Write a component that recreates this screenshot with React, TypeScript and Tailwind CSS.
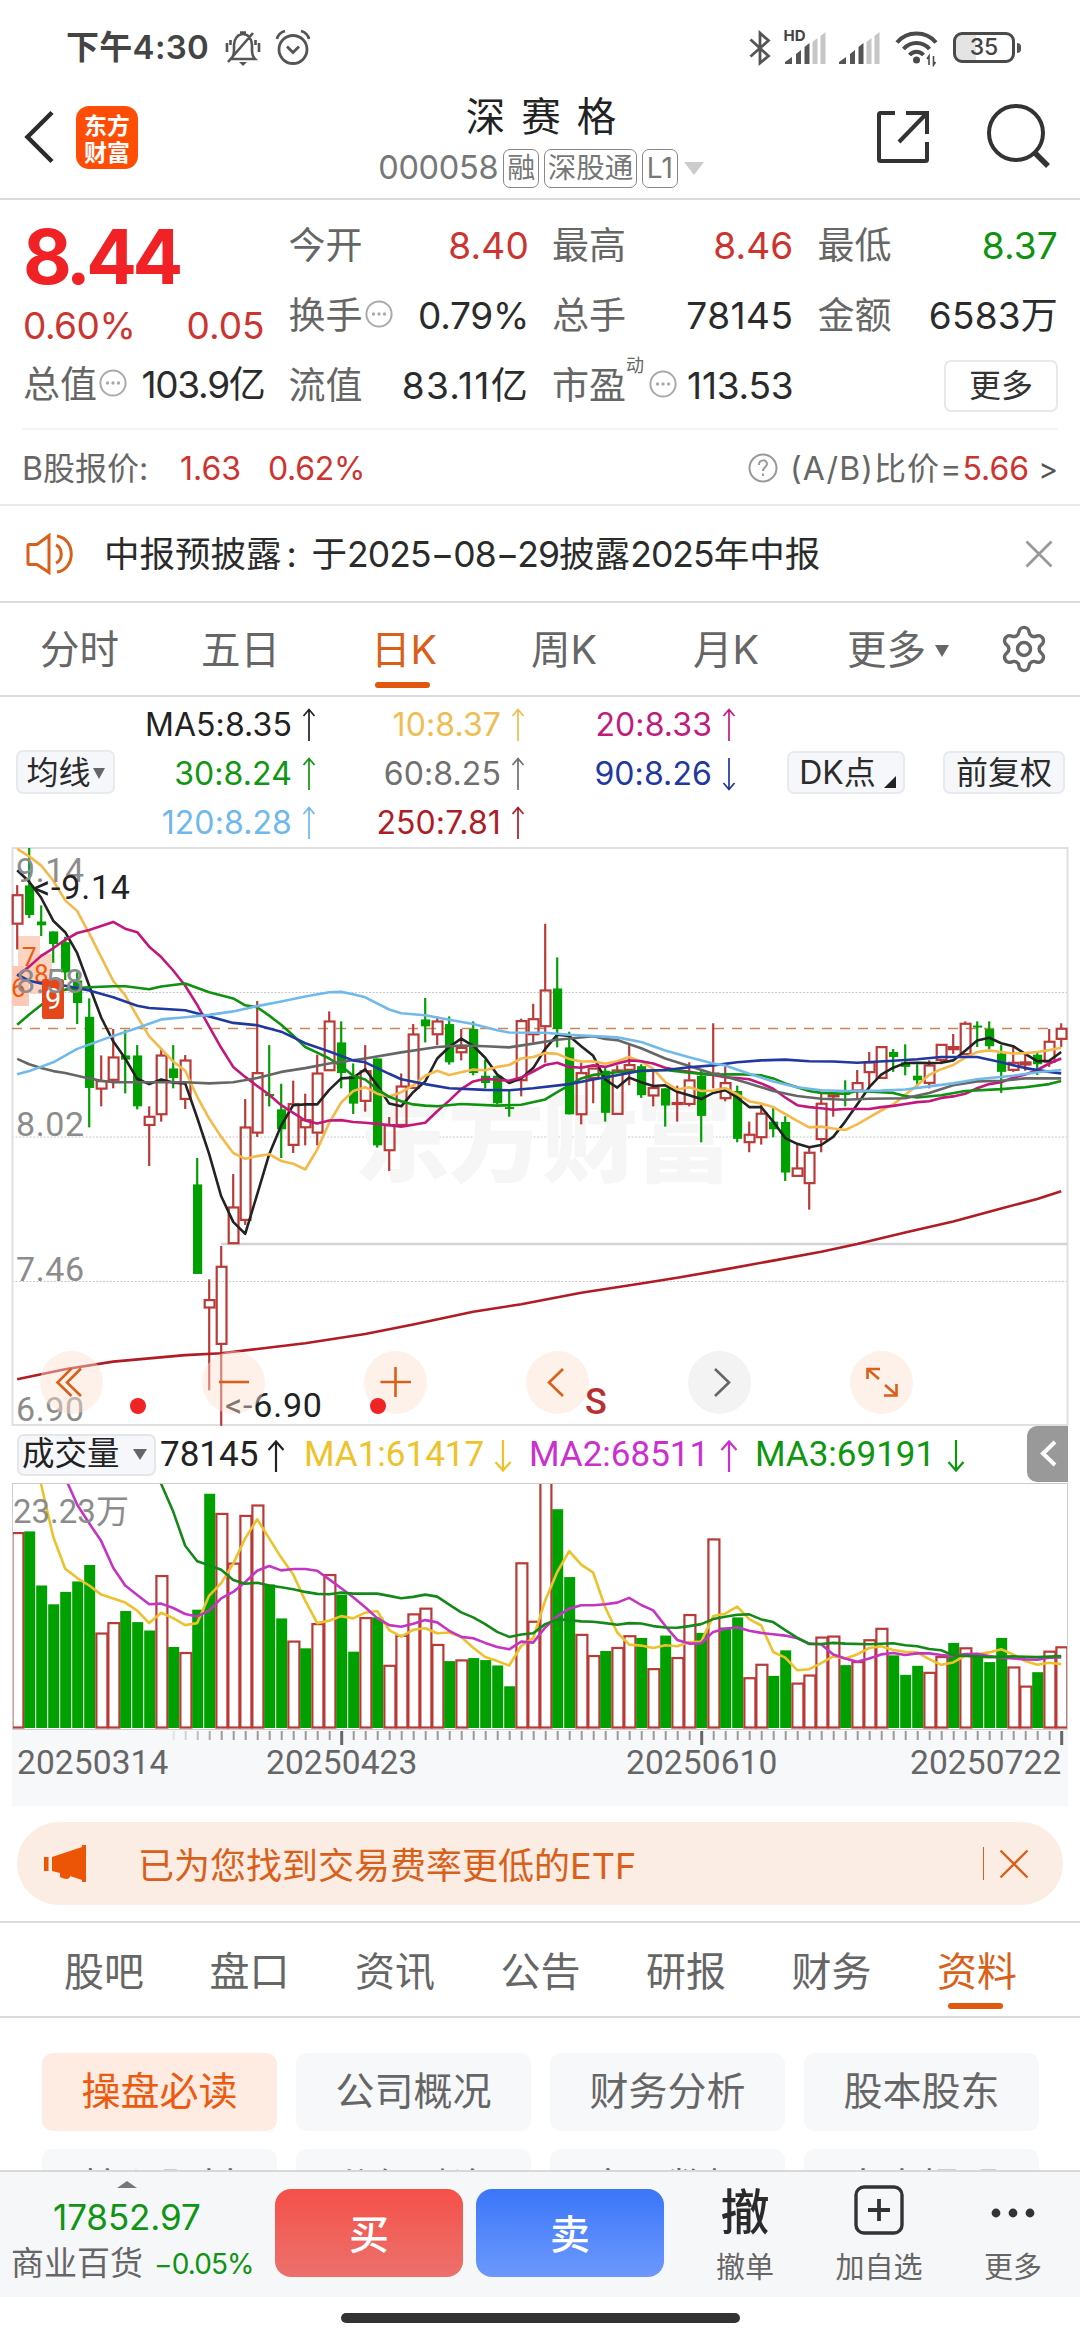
import type { ReactNode } from 'react'
import { Settings } from 'lucide-react'

const CJK = "font-['Inter','Noto_Sans_CJK_SC',sans-serif]"
const ROBOTO = "font-['Roboto','Noto_Sans_CJK_SC',sans-serif]"

// ── Price candles: [up, bodyTop, bodyBottom, high, low] on the price grid (20 = 9.14, 1528 = 6.90) ──
const CANDLES: number[][] = [
  [1, 142, 219, 117, 285], [0, 118, 195, 20, 203], [0, 212, 222, 170, 250], [0, 238, 271, 238, 320],
  [0, 266, 345, 252, 365], [0, 366, 425, 345, 480], [0, 461, 647, 413, 750], [1, 628, 650, 562, 695],
  [1, 566, 627, 493, 648], [0, 562, 573, 495, 661], [0, 562, 695, 535, 703], [1, 721, 745, 695, 851],
  [1, 561, 717, 543, 735], [0, 596, 621, 535, 648], [1, 574, 677, 561, 702], [0, 899, 1133, 830, 1133],
  [1, 1200, 1222, 1147, 1437], [1, 1113, 1317, 1060, 1530], [1, 958, 1054, 872, 1054], [1, 749, 993, 676, 1005],
  [1, 607, 765, 420, 775], [0, 663, 668, 535, 695], [0, 703, 755, 636, 830], [1, 688, 797, 628, 817],
  [1, 730, 751, 662, 797], [1, 608, 765, 560, 797], [1, 472, 602, 447, 602], [0, 528, 608, 473, 648],
  [0, 615, 688, 583, 715], [1, 602, 682, 535, 709], [0, 570, 797, 570, 803], [1, 743, 811, 723, 864],
  [1, 642, 745, 609, 745], [1, 506, 648, 480, 648], [0, 468, 486, 412, 528], [1, 472, 508, 460, 535],
  [0, 480, 580, 460, 586], [1, 541, 555, 493, 575], [0, 493, 608, 473, 614], [0, 615, 634, 573, 648],
  [0, 615, 687, 615, 690], [0, 697, 702, 650, 722], [1, 471, 628, 466, 669], [1, 466, 508, 427, 528],
  [1, 391, 487, 218, 581], [0, 387, 493, 306, 541], [0, 541, 716, 500, 716], [1, 607, 717, 581, 742],
  [1, 595, 622, 595, 687], [0, 602, 712, 590, 735], [1, 600, 716, 588, 716], [1, 586, 601, 535, 640],
  [0, 590, 666, 585, 673], [1, 646, 668, 602, 695], [0, 648, 693, 648, 748], [1, 685, 690, 641, 735],
  [1, 626, 690, 580, 695], [0, 615, 720, 600, 789], [1, 608, 613, 478, 648], [1, 633, 675, 590, 682],
  [0, 655, 780, 641, 789], [1, 768, 790, 735, 815], [1, 713, 777, 690, 795], [0, 735, 755, 697, 776],
  [0, 736, 868, 721, 890], [1, 856, 878, 795, 878], [1, 815, 897, 803, 965], [1, 687, 782, 660, 815],
  [1, 665, 670, 665, 722], [0, 660, 665, 627, 695], [1, 633, 655, 600, 675], [1, 579, 607, 553, 650],
  [1, 539, 622, 539, 622], [0, 553, 566, 545, 605], [0, 580, 592, 533, 614], [0, 615, 627, 585, 643],
  [1, 587, 635, 575, 648], [1, 533, 575, 533, 585], [1, 539, 547, 506, 558], [1, 478, 560, 473, 560],
  [0, 484, 489, 473, 540], [0, 493, 538, 473, 545], [0, 557, 605, 535, 660], [1, 580, 601, 535, 605],
  [1, 579, 587, 553, 602], [0, 560, 585, 555, 613], [1, 525, 580, 493, 592], [1, 491, 520, 478, 540],
]

// Moving averages as "candleIndex:level" pairs
const PRICE_LINES = [
  { color: '#b01c24', pts: '0:1408 4:1382 8:1362 14:1345 17:1340 20:1329 24:1314 29:1290 33:1265 38:1232 42:1212 47:1182 52:1158 55:1143 59:1121 63:1098 67:1075 70:1055 74:1025 78:996 82:962 85:937 87:917' },
  { color: '#232323', pts: '0:78 1:108 2:150 3:210 4:240 5:295 6:380 7:463 8:525 9:570 10:623 11:637 12:625 13:633 14:635 15:725 16:820 17:930 18:997 19:1028 20:925 21:820 22:745 23:692 24:690 25:690 26:652 27:622 28:620 29:598 30:640 31:688 32:695 33:658 34:630 35:570 36:540 37:518 38:537 39:568 40:612 41:634 42:622 43:595 44:545 45:508 46:511 47:538 48:563 49:625 50:646 51:620 52:632 53:642 54:640 55:657 56:666 57:676 58:660 59:653 60:672 61:697 62:697 63:735 64:778 65:793 66:802 67:796 68:775 69:735 70:690 71:645 72:612 73:594 74:582 75:581 76:582 77:581 78:575 79:550 80:523 81:516 82:530 83:538 84:558 85:577 86:576 87:553' },
  { color: '#f5b94a', pts: '0:22 1:42 2:66 3:105 4:157 5:185 6:243 7:305 8:367 9:405 10:460 11:512 12:545 13:578 14:602 15:670 16:727 17:775 18:817 19:832 20:825 21:820 22:838 23:845 24:860 25:808 26:738 27:685 28:655 29:645 30:662 31:670 32:658 33:640 34:615 35:602 36:613 37:606 38:599 39:601 40:592 41:587 42:570 43:566 44:556 45:558 46:571 47:578 48:577 49:584 50:577 51:566 52:578 53:597 54:632 55:651 56:645 57:655 58:654 59:647 60:663 61:682 62:688 63:697 64:715 65:733 66:750 67:748 68:753 69:757 70:742 71:724 72:706 73:690 74:665 75:640 76:613 77:598 78:587 79:568 80:553 81:549 82:553 83:557 84:556 85:553 86:548 87:542' },
  { color: '#c2187c', pts: '0:355 1:330 2:302 3:282 4:260 5:242 6:234 7:224 8:213 9:231 10:240 11:278 12:305 13:340 14:380 15:430 16:487 17:542 18:592 19:618 20:642 21:665 22:692 23:712 24:732 25:740 26:732 27:731 28:736 29:738 30:741 31:744 32:748 33:743 34:738 35:708 36:680 37:650 38:630 39:623 40:626 41:628 42:620 43:604 44:587 45:581 46:592 47:594 48:588 49:592 50:583 51:575 52:577 53:583 54:594 55:600 56:605 57:610 58:613 59:619 60:621 61:624 62:635 63:649 64:672 65:692 66:697 67:700 68:704 69:702 70:702 71:702 72:697 73:694 74:689 75:684 76:682 77:673 78:669 79:662 80:648 81:637 82:632 83:620 84:612 85:600 86:583 87:570' },
  { color: '#0e9210', pts: '0:482 1:455 2:430 3:405 4:390 5:386 6:384 8:381 9:381 11:389 12:382 14:374 16:397 18:413 19:431 20:436 21:458 22:482 23:510 24:540 25:555 26:570 27:590 28:615 29:625 30:650 31:670 32:682 33:690 34:693 35:695 37:689 40:693 42:691 44:677 45:658 46:640 47:622 48:613 50:606 52:603 54:600 56:607 58:612 60:611 62:614 63:622 64:635 65:645 66:655 67:660 69:662 70:655 72:658 73:660 74:668 75:672 77:666 79:655 82:650 84:645 86:637 87:629' },
  { color: '#666666', pts: '0:571 1:585 2:595 3:603 4:608 6:622 7:628 8:632 11:632 14:632 16:635 18:632 20:621 22:605 24:595 26:583 29:570 32:554 35:540 37:536 39:538 41:541 43:531 45:521 48:512 49:519 50:522 52:543 54:570 56:590 58:610 59:617 61:635 63:655 65:668 67:675 69:678 71:675 74:674 76:660 78:640 80:630 82:628 84:622 87:622' },
  { color: '#21389f', pts: '0:350 1:367 2:374 4:380 6:392 8:410 10:432 11:438 14:444 16:460 18:477 20:483 22:500 24:530 26:552 28:575 29:580 31:610 32:624 34:637 36:648 39:652 41:653 43:648 46:637 48:625 50:614 52:602 54:600 56:593 58:588 60:580 62:575 64:573 66:577 68:578 70:581 73:576 75:572 77:566 79:566 80:566 82:580 84:595 86:605 87:609' },
  { color: '#72b9ea', pts: '0:611 1:603 3:580 5:545 8:511 10:490 12:468 14:462 16:456 18:447 20:433 22:421 24:408 26:397 27:396 28:402 29:410 31:442 32:452 34:457 36:469 38:480 40:496 41:502 44:503 46:508 50:515 52:527 54:549 56:567 58:583 59:588 61:610 63:630 65:645 67:653 69:655 72:654 74:651 76:643 78:635 80:624 83:615 85:606 87:600' },
]

// Volume bars: positive = rising day, negative = falling day; number is the bar's top level
const VOLUMES = [
  306, -304, -465, -521, -484, -453, -404, 605, 574, -541, -574, -599, 434, -648, 663, -537, -192, 249, 397, 255, 224,
  -462, -563, 629, -652, 577, 431, -492, -662, 559, -560, 701, 612, 548, 531, 639, -690, 685, -681, -687, -703, -765,
  396, 570, 150, -238, -440, 609, 672, -660, 648, 613, -621, 711, -614, 678, 550, -606, 325, -590, -560, 738, 698,
  -734, -658, 754, 730, 617, 614, -702, 690, 625, 591, -673, -731, -704, 722, 675, -636, 649, -673, -693, -621, 706,
  763, -723, 659, 646,
]

const VOLUME_LINES = [
  { color: '#ecc22c', pts: '1.7:120 2:165 3:320 4:415 5:443 6:465 7:492 8:504 9:516 10:540 11:577 12:546 13:562 14:583 15:577 16:495 17:458 18:400 19:325 20:268 21:325 22:382 23:432 24:510 25:577 26:570 27:556 28:563 29:546 30:541 31:598 32:617 33:597 34:592 35:607 36:605 37:618 38:650 39:678 40:690 41:703 42:645 43:622 44:510 45:425 46:363 47:403 48:427 49:530 50:605 51:641 52:644 53:651 54:643 55:646 56:634 57:632 58:556 59:549 60:528 61:565 62:584 63:663 64:680 65:717 66:714 67:696 68:676 69:682 70:670 71:651 72:646 73:657 74:662 75:664 76:684 77:701 78:694 79:674 80:670 81:664 82:655 83:670 84:690 85:701 86:695 87:699' },
  { color: '#c435c4', pts: '3.5:105 4.2:160 5:225 6:280 7:333 8:412 9:465 10:493 11:521 12:519 13:532 14:550 15:557 16:540 17:503 18:484 19:455 20:421 21:407 22:420 23:416 24:416 25:421 26:447 27:473 28:500 29:530 30:562 31:583 32:588 33:579 34:568 35:575 36:600 37:618 38:622 39:636 40:648 41:655 42:632 43:635 44:590 45:557 46:534 47:524 48:524 49:521 50:516 51:502 52:523 53:539 54:585 55:627 56:638 57:637 58:603 59:594 60:589 61:600 62:606 63:610 64:614 65:622 66:638 67:640 68:670 69:682 70:692 71:682 72:670 73:666 74:672 75:667 76:667 77:672 78:675 79:669 80:668 81:675 82:680 83:682 84:685 85:686 86:680 87:679' },
  { color: '#15881a', pts: '11.4:115 12:163 13:245 14:347 15:393 16:405 17:418 18:449 19:460 20:457 21:465 22:470 23:476 24:484 25:490 26:491 27:486 28:489 30:489 31:496 32:503 33:499 34:492 35:498 36:522 37:545 38:560 39:580 40:603 41:618 42:611 43:607 44:580 45:566 46:568 47:572 48:573 49:577 50:582 51:577 52:578 53:586 54:590 55:591 56:586 57:580 58:565 59:558 60:552 61:551 62:566 63:574 64:598 65:620 66:639 67:639 68:636 69:638 71:640 73:637 74:643 75:646 76:654 77:658 78:673 80:676 81:678 83:676 85:678 87:675' },
]

const RED = '#b93a36'
const GREEN = '#00a000'

const cx = (i: number) => 17.2 + i * 12
const py = (v: number) => (v - 20) * 0.3827 + 1
const vy = (v: number) => (v - 160) / 2.976

function toPoints(pts: string, y: (v: number) => number) {
  return pts.split(' ').map(p => {
    const [i, v] = p.split(':').map(Number)
    return `${cx(i).toFixed(1)},${y(v).toFixed(1)}`
  }).join(' ')
}

// ── Small pieces ──────────────────────────────────────────────────────
function Dots() {
  return (
    <svg width="28" height="28" viewBox="0 0 28 28" fill="none" className="mb-[4px] ml-[2px] shrink-0">
      <circle cx="14" cy="14" r="12.6" stroke="#aaa" strokeWidth="2" />
      <g fill="#aaa"><circle cx="8.5" cy="14" r="1.7" /><circle cx="14" cy="14" r="1.7" /><circle cx="19.5" cy="14" r="1.7" /></g>
    </svg>
  )
}

function Arrow({ down = false }: { down?: boolean }) {
  return (
    <svg width="14" height="34" viewBox="0 0 14 34" fill="none" stroke="currentColor" strokeWidth="1.7" className={down ? 'rotate-180' : ''}>
      <path d="M7 33V2M1.5 8 7 1.5 12.5 8" />
    </svg>
  )
}

function VolArrow({ down = false }: { down?: boolean }) {
  return (
    <svg width="18" height="34" viewBox="0 0 18 34" fill="none" stroke="currentColor" strokeWidth="2.2" className={down ? 'rotate-180' : ''}>
      <path d="M9 33V2M1.5 11 9 2.5 16.5 11" />
    </svg>
  )
}

function Signal() {
  return (
    <>
      <g fill="#555"><path d="M0 35v-2l7-5v7zM11 25l5-4v14h-5zM19.5 18l5-4v21h-5z" /></g>
      <g fill="#c6c6c6"><path d="M27.500 13l5-4v26h-5zM35.500 7l5-4v32h-5z" /></g>
    </>
  )
}

interface StatProps {
  label: ReactNode
  value: string
  color?: string
  icon?: boolean
  tracking?: string
}

function Stat({ label, value, color = 'text-[#2b2b2b]', icon, tracking = 'tracking-[0.2px]' }: StatProps) {
  return (
    <div className="flex h-[70px] items-center justify-between whitespace-nowrap">
      <span className="flex items-center text-[#666]">{label}{icon && <Dots />}</span>
      <span className={`${color} ${tracking}`}>{value}</span>
    </div>
  )
}

function StatusBar() {
  return (
    <div className="flex h-[92px] items-center pt-[3px] pl-[66px] text-[#444]">
      <span className="w-[159px] text-[33px] font-semibold tracking-[0.3px] whitespace-nowrap">下午4:30</span>
      <svg width="36" height="36" viewBox="0 0 36 36" fill="none" stroke="#555" strokeWidth="2.6">
        <path d="M6 29h24c-2-2-3-5-3-9v-5c0-6-4-11-9-11s-9 5-9 11v5c0 4-1 7-3 9zM15 2.500h6M3 32 28 3M2 13v9M34 13v9M5.500 10v5M30.500 10v5" />
        <path d="M14 32h8l-4 4z" fill="#555" stroke="none" />
      </svg>
      <svg width="36" height="38" viewBox="0 0 36 38" fill="none" stroke="#555" strokeWidth="2.800" className="ml-[14px]">
        <circle cx="18" cy="20.500" r="14" />
        <path d="M12 17.500l6 6 6-6M2 10c1-4 4-7 8-8M34 10c-1-4-4-7-8-8" />
      </svg>
      <svg width="22" height="36" viewBox="0 0 22 36" fill="none" stroke="#555" strokeWidth="2.800" className="ml-[438px]">
        <path d="M1.500 9.500 19.500 26 11 33V3L19.500 10.500 1.500 26.500" />
      </svg>
      <svg width="45" height="38" viewBox="-3 0 45 38" className="ml-[11px] overflow-visible">
        <text x="-1.500" y="12" fontSize="15" fontWeight="700" fill="#444" fontFamily="Inter">HD</text>
        <Signal />
      </svg>
      <svg width="42" height="38" viewBox="0 0 42 38" className="ml-[12px]"><Signal /></svg>
      <svg width="44" height="38" viewBox="0 0 44 38" fill="none" stroke="#4a4a4a" strokeWidth="4" className="ml-[14px]">
        <path d="M2 13.500c10-12 29-12 39 0M8.500 20c7-8 19-8 26 0M14.500 26c4-4.500 10-4.500 14 0" />
        <circle cx="21.500" cy="31" r="3.500" fill="#4a4a4a" stroke="none" />
        <path d="M34 36v-9l-2 3M38.500 27v9l2-3" strokeWidth="1.600" />
      </svg>
      <div className="ml-[14px] flex h-[31px] w-[62px] items-center justify-center rounded-[9px] border-[3.5px] border-[#4a4a4a] bg-linear-to-r from-[#e4e4e4] from-35% to-white to-35% text-[23px] font-medium">35</div>
      <div className="ml-[2px] h-[10px] w-[4px] rounded-r bg-[#555]" />
    </div>
  )
}

function Header() {
  return (
    <div className="flex h-[108px] border-b-2 border-[#dcdcdc] pl-[24px]">
      <svg width="32" height="54" viewBox="0 0 32 54" fill="none" stroke="#2b2b2b" strokeWidth="4.500" className="mt-[18px]">
        <path d="M28 2.500 3.500 27 28 51.500" />
      </svg>
      <div className="mt-[14px] ml-[20px] flex h-[63px] w-[62px] flex-col items-center justify-center rounded-[13px] bg-[#ff4d05] font-['Noto_Sans_CJK_SC',sans-serif] text-[23px] leading-[27px] font-bold text-white">
        <span>东方</span>
        <span>财富</span>
      </div>
      <div className="ml-[233px] flex w-[340px] flex-col items-center">
        <div className="h-[56px] text-[39.5px] leading-[51px] text-[#222] [word-spacing:5px]">深 赛 格</div>
        <div className="flex h-[40px] items-center gap-[5px] text-[32.5px] leading-[38px] whitespace-nowrap text-[#777]">
          <span className="tracking-[-0.3px]">000058</span>
          <span className="flex h-[39px] items-center rounded-[7px] border border-[#888] px-[3px] text-[28px]">融</span>
          <span className="flex h-[39px] items-center rounded-[7px] border border-[#888] px-[2.500px] text-[28.5px]">深股通</span>
          <span className="flex h-[39px] items-center rounded-[7px] border border-[#888] px-[4px] text-[28px]">L1</span>
          <span className="ml-[1px] border-x-[10px] border-t-[13px] border-x-transparent border-t-[#ccc]" />
        </div>
      </div>
      <svg width="56" height="56" viewBox="0 0 56 56" fill="none" stroke="#333" strokeWidth="4" className="mt-[17px] ml-[164px]">
        <path d="M20 4H5.500Q4 4 4 5.500V50.500Q4 52 5.500 52H50.500Q52 52 52 50.500V33M31 4H52V25M52 4 24 33" />
      </svg>
      <svg width="66" height="68" viewBox="0 0 66 68" fill="none" stroke="#333" strokeWidth="4" className="mt-[11px] ml-[55px]">
        <circle cx="30" cy="30" r="27" />
        <path d="M49 50 62 63" strokeWidth="5.500" />
      </svg>
    </div>
  )
}

function Quote() {
  return (
    <>
      <div className="mx-[22px] flex h-[230px] border-b-[2px] border-[#f4f4f6] pt-[11px] text-[37px]">
        <div className="w-[243px] pl-[1px]">
          <div className="h-[91px] text-[75px] leading-[91px] font-bold tracking-[-4.5px] text-[#f02226]">8.44</div>
          <div className="flex h-[48px] items-center justify-between text-[#cc3430]"><span className="tracking-[-0.5px]">0.60%</span><span>0.05</span></div>
          <Stat label="总值" value="103.9亿" icon tracking="tracking-[-1.3px]" />
        </div>
        <div className="ml-[24px] w-[241px]">
          <Stat label="今开" value="8.40" color="text-[#cc3430]" />
          <Stat label="换手" value="0.79%" icon tracking="tracking-[-0.3px]" />
          <Stat label="流值" value="83.11亿" tracking="tracking-[1.3px]" />
        </div>
        <div className="ml-[23px] w-[242px]">
          <Stat label="最高" value="8.46" color="text-[#cc3430]" />
          <Stat label="总手" value="78145" tracking="tracking-[0.5px]" />
          <Stat label={<>市盈<sup className="-top-[20px] w-[21px] text-[18px] leading-none">动</sup></>} value="113.53" icon tracking="tracking-[-0.2px]" />
        </div>
        <div className="ml-[24px] w-[241px]">
          <Stat label="最低" value="8.37" color="text-[#0e9210]" />
          <Stat label="金额" value="6583万" />
          <div className="flex h-[70px] items-center justify-end">
            <span className="flex h-[52px] w-[114px] items-center justify-center rounded-[7px] border-2 border-[#e8e8ea] text-[32px] text-[#333]">更多</span>
          </div>
        </div>
      </div>
      <div className="flex h-[76px] items-center border-b-2 border-[#ebebeb] px-[22px] pt-[4px] text-[32px] text-[#666]">
        <span className="w-[158px]">B股报价:</span>
        <span className="w-[88px] text-[#cc3430]">1.63</span>
        <span className="tracking-[-0.3px] text-[#cc3430]">0.62%</span>
        <svg width="30" height="30" viewBox="0 0 30 30" fill="none" stroke="#999" strokeWidth="2" className="mb-[2px] ml-auto">
          <circle cx="15" cy="15" r="13.500" />
          <path d="M11 12c0-6 8-6 8-1 0 3-4 3-4 7M15 20.500v2.500" />
        </svg>
        <span className="ml-[12px] tracking-[1.1px]">(A/B)比价=</span>
        <span className="text-[#cc3430]">5.66</span>
        <span className="ml-[9px] text-[30px] text-[#555]">&gt;</span>
      </div>
    </>
  )
}

function Notice() {
  return (
    <div className="flex h-[97px] items-center border-b-2 border-[#dcdcdc] pl-[26px] text-[35.5px] text-[#2b2b2b]">
      <svg width="50" height="42" viewBox="0 0 50 42" fill="none" stroke="#d9601a" strokeWidth="3">
        <path d="M3 11.500H11L23 2.500V39.500L11 31.500H3Q2 31.500 2 30V13Q2 11.500 3 11.500zM30 12c7 3 7 15 0 18M31 3c19 3 19 33 0 36" />
      </svg>
      <span className="ml-[28px] pt-[3px] whitespace-nowrap">
        中报预披露<span className="inline-block w-[30px] pl-[5px]">:</span>于<span className="tracking-[-0.9px]">2025−08−29</span>披露<span className="tracking-[-0.9px]">2025</span>年中报
      </span>
      <svg width="28" height="28" viewBox="0 0 28 28" stroke="#999" strokeWidth="2.800" className="mr-[27px] ml-auto">
        <path d="M1.500 1.500 26.500 26.500M26.500 1.500 1.500 26.500" />
      </svg>
    </div>
  )
}

function PeriodTabs() {
  return (
    <div className="flex h-[94px] items-center border-b-2 border-[#dcdcdc] pt-[4px] text-[39.5px] text-[#666]">
      <span className="ml-[40px] w-[161px]">分时</span>
      <span className="w-[170px]">五日</span>
      <span className="relative w-[160px] text-[#d9601a]">
        日K
        <span className="absolute -bottom-[7px] left-[4px] h-[6px] w-[55px] rounded bg-[#e0590f]" />
      </span>
      <span className="w-[162px]">周K</span>
      <span className="w-[154px]">月K</span>
      <span className="w-[88px]">更多</span>
      <span className="border-x-[7px] border-t-[12px] border-x-transparent border-t-[#666]" />
      <Settings className="mb-[4px] ml-[49px] h-[52px] w-[52px] text-[#666]" strokeWidth={1.6} />
    </div>
  )
}

const MA_CELLS = [
  ['MA5:8.35', 'text-[#222]', 'up'], ['10:8.37', 'text-[#f0bd50]', 'up'], ['20:8.33', 'text-[#c01c80]', 'up'],
  ['30:8.24', 'text-[#109612]', 'up'], ['60:8.25', 'text-[#707070]', 'up'], ['90:8.26', 'text-[#2138a0]', 'down'],
  ['120:8.28', 'text-[#6fb8ea]', 'up'], ['250:7.81', 'text-[#ae1c26]', 'up'],
]

function MaLegend() {
  return (
    <div className="flex h-[150px] items-center pl-[16px] text-[32px] text-[#2b2b2b]">
      <div className="flex h-[44px] w-[99px] items-center justify-center rounded-[7px] border-2 border-[#e8eaee] bg-[#f6f7fa] pt-[2px] whitespace-nowrap">
        均线<span className="ml-[2px] border-x-[6.500px] border-t-[11px] border-x-transparent border-t-[#666]" />
      </div>
      <div className="grid w-[621px] grid-cols-[201px_209px_211px] pt-[3px]">
        {MA_CELLS.map(([text, color, dir]) => (
          <div key={text} className={`flex h-[49px] items-center justify-end gap-[10px] tracking-[0.1px] whitespace-nowrap ${color}`}>
            {text}<Arrow down={dir === 'down'} />
          </div>
        ))}
      </div>
      <div className="ml-[51px] flex h-[43px] w-[118px] items-center justify-center rounded-[7px] border-2 border-[#e8eaee] bg-[#f6f7fa] pt-[2px] pl-[3px]">
        DK点
        <svg width="12" height="12" viewBox="0 0 12 12" fill="#222" className="mt-[18px] ml-[8px]"><path d="M12 0V12H0z" /></svg>
      </div>
      <div className="ml-[38px] flex h-[43px] w-[122px] items-center justify-center rounded-[7px] border-2 border-[#e8eaee] bg-[#f6f7fa] pt-[2px]">前复权</div>
    </div>
  )
}

const CHART_BUTTONS = [
  'M31.500 17.500 17.500 31.500 31.500 45M41 17.500 27 31.500 41 45',
  'M17 31H47',
  'M16.500 31H47M31.500 16V46',
  'M37 18 23 31.500 37 45',
  'M27 18 41 31.500 27 45',
  'M17.500 28V18H30M17.500 18 29 28M35 34 46.500 44M34 44.500H46.500V33',
]

function PriceChart() {
  return (
    <div className="relative h-[579px]">
      <svg width="1080" height="579" viewBox="0 0 1080 579" className="block">
        <g stroke="#c9c9c9" strokeWidth="1.200" strokeDasharray="2 1.500">
          <line x1="12" x2="1067" y1="145.500" y2="145.500" />
          <line x1="12" x2="1067" y1="290" y2="290" />
          <line x1="12" x2="1067" y1="434.500" y2="434.500" />
        </g>
        <text x="354" y="327" fontSize="96" fontWeight="900" fill="#f6f6f6" fontFamily="Noto Sans CJK SC" textLength="378">东方财富</text>
        <rect x="12.500" y="1" width="1055" height="577" fill="none" stroke="#e0e0e0" strokeWidth="2" />
        <line x1="12" x2="1050" y1="181.500" y2="181.500" stroke="#cf8455" strokeWidth="1.400" strokeDasharray="10 8" />
        <line x1="221" x2="1067" y1="397" y2="397" stroke="#d4d4d8" strokeWidth="2.500" />
        <g fill="#fbc9b5">
          <rect x="12" y="119" width="17" height="40" /><rect x="18" y="89" width="22" height="42" opacity=".8" /><rect x="30" y="107" width="22" height="40" opacity=".8" />
        </g>
        <g fontFamily="Roboto" fontSize="26" fill="#f0590c"><text x="11" y="150">6</text><text x="22" y="119">7</text><text x="34" y="136">8</text></g>
        {CANDLES.map(([up, top, bottom, high, low], i) => {
          const color = up ? RED : GREEN
          const h = Math.max(2, py(bottom) - py(top))
          return (
            <g key={i}>
              <line x1={cx(i)} x2={cx(i)} y1={py(high)} y2={py(up ? top : low)} stroke={color} strokeWidth="2.200" />
              {up ? (
                <>
                  <line x1={cx(i)} x2={cx(i)} y1={py(bottom)} y2={py(low)} stroke={color} strokeWidth="2.200" />
                  <rect x={cx(i) - 4.5} y={py(top) + 0.5} width="9.800" height={Math.max(1, h - 1)} fill="none" stroke={color} strokeWidth="2.200" />
                </>
              ) : (
                <rect x={cx(i) - 4.2} y={py(top)} width="9.200" height={h} fill={color} />
              )}
            </g>
          )
        })}
        {PRICE_LINES.map(l => (
          <polyline key={l.color} points={toPoints(l.pts, py)} fill="none" stroke={l.color} strokeWidth="2.600" strokeLinejoin="round" />
        ))}
        <rect x="42" y="132" width="22" height="40" rx="2" fill="#e3471a" />
        <text x="45" y="162" fontFamily="Roboto" fontSize="29" fill="#fff">9</text>
        <g fontFamily="Roboto" fontSize="34" fill="#8c8c8c" letterSpacing="0.6">
          <text x="16" y="35">9.14</text><text x="16" y="146">8.58</text><text x="16" y="289">8.02</text><text x="16" y="434">7.46</text>
          <text x="16" y="574">6.90</text>
        </g>
        <g fontFamily="Roboto" fontSize="34" fill="#222" letterSpacing="0.8">
          <text x="33" y="52">&lt;-9.14</text><text x="225" y="570">&lt;-6.90</text>
        </g>
      </svg>
      <div className="absolute top-[504px] left-[40px] flex gap-[99px]">
        {CHART_BUTTONS.map((d, i) => (
          <svg key={d} width="63" height="63" viewBox="0 0 63 63" fill="none" stroke={i === 4 ? '#666' : '#d9601a'} strokeWidth="2.600">
            <circle cx="31.500" cy="31.500" r="31.500" fill={i === 4 ? '#e4e4e4' : '#fde0d0'} fillOpacity=".45" stroke="none" />
            <path d={d} />
          </svg>
        ))}
      </div>
      <svg width="1080" height="579" viewBox="0 0 1080 579" className="absolute top-0 left-0">
        <circle cx="138" cy="559" r="8" fill="#f02424" />
        <circle cx="378" cy="559" r="8" fill="#f02424" />
        <text x="585" y="567" fontFamily="Roboto" fontSize="36" fontWeight="500" fill="#b93030">S</text>
      </svg>
    </div>
  )
}

function VolumeChart() {
  return (
    <div className={ROBOTO}>
      <div className="flex h-[57px] items-center pl-[17px] text-[35px] whitespace-nowrap">
        <div className="mr-[4px] flex h-[42px] w-[139px] items-center justify-between rounded-[7px] border-2 border-[#e4e6ea] bg-[#f6f7fa] pr-[7px] pl-[3px] text-[32.5px] text-[#222]">
          成交量<span className="border-x-[7px] border-t-[11px] border-x-transparent border-t-[#666]" />
        </div>
        <span className="flex w-[144px] items-center gap-[9px] pt-[2px] text-[#222]">78145<VolArrow /></span>
        <span className="flex w-[225px] items-center gap-[10px] pt-[2px] text-[#eec22a]">MA1:61417<VolArrow down /></span>
        <span className="flex w-[226px] items-center gap-[11px] pt-[2px] text-[#cb30cf]">MA2:68511<VolArrow /></span>
        <span className="flex items-center gap-[12px] pt-[2px] text-[#0e960f]">MA3:69191<VolArrow down /></span>
        <span className="mb-[2px] ml-auto flex h-[56px] w-[53px] items-center rounded-l-[10px] border-r-[12px] border-white bg-[#999] bg-clip-padding pl-[13px]">
          <svg width="17" height="27" viewBox="0 0 17 27" fill="none" stroke="#fff" strokeWidth="4"><path d="M15 2 3 13.500 15 25" /></svg>
        </span>
      </div>
      <svg width="1080" height="325" viewBox="0 0 1080 325" className="block">
        <defs><clipPath id="vol"><rect x="12" y="0.500" width="1056" height="246" /></clipPath></defs>
        <rect x="12" y="247" width="1056" height="76" fill="#f7f8fa" />
        <g clipPath="url(#vol)">
          {VOLUMES.map((v, i) => v > 0
            ? <rect key={i} x={cx(i) - 4.8} y={vy(v) + 1} width="11" height={243.5 - vy(v)} fill="#fff" stroke={RED} strokeWidth="2.200" />
            : <rect key={i} x={cx(i) - 5} y={vy(-v)} width="11" height={245 - vy(-v)} fill={GREEN} />)}
          {VOLUME_LINES.map(l => (
            <polyline key={l.color} points={toPoints(l.pts, vy)} fill="none" stroke={l.color} strokeWidth="2.600" strokeLinejoin="round" />
          ))}
        </g>
        <rect x="12.500" y="0.500" width="1055" height="246" fill="none" stroke="#ccc" />
        <text x="13" y="40" fontFamily="Roboto, Noto Sans CJK SC" fontSize="33" fill="#8c8c8c">23.23万</text>
        {CANDLES.map((_, i) => i >= 13 && (
          <line
            key={i} x1={cx(i) + 0.5} x2={cx(i) + 0.5} y1="248" y2={i === 27 || i === 57 || i === 87 ? 262 : 257}
            stroke={i === 27 || i === 57 || i === 87 ? '#666' : '#999'} strokeWidth={i === 27 || i === 57 || i === 87 ? 3 : 2}
            opacity={Math.min(1, (i - 12) / 5)}
          />
        ))}
        <g fontFamily="Roboto" fontSize="33.500" fill="#666" letterSpacing="0.100">
          <text x="17" y="291">20250314</text><text x="266" y="291">20250423</text>
          <text x="626" y="291">20250610</text><text x="910" y="291">20250722</text>
        </g>
      </svg>
    </div>
  )
}

function Banner() {
  return (
    <div className="h-[115px] border-b-2 border-[#dcdcdc] px-[17px] pt-[14px]">
      <div className="flex h-[83px] items-center rounded-full bg-[#fcede4] text-[36px] text-[#d9601a]">
        <svg width="44" height="38" viewBox="0 0 44 38" fill="#ec5505" className="ml-[27px]">
          <path d="M0 12H4.500V26H0zM8 12 38 2V0H42V37H38V35L26 31V32Q24 36 16 32V28L8 26z" />
        </svg>
        <span className="ml-[50px] pt-[4px]">已为您找到交易费率更低的ETF</span>
        <span className="ml-auto h-[33px] w-[1.500px] bg-[#d9601a]" />
        <svg width="30" height="30" viewBox="0 0 30 30" stroke="#d9601a" strokeWidth="2.400" className="mr-[34px] ml-[15px]">
          <path d="M1.500 1.500 28.500 28.500M28.500 1.500 1.500 28.500" />
        </svg>
      </div>
    </div>
  )
}

const SECTIONS = ['股吧', '盘口', '资讯', '公告', '研报', '财务', '资料']

const TOPICS = ['操盘必读', '公司概况', '财务分析', '股本股东', '核心题材', '分红融资', '交易数据', '大事提醒']

function Sections() {
  return (
    <>
      <div className="flex h-[95px] items-center gap-[65.500px] border-b-2 border-[#dcdcdc] px-[64px] pt-[4px] text-[40px] text-[#666]">
        {SECTIONS.map(s => (
          <span key={s} className={`relative w-[80px] shrink-0 ${s === '资料' ? 'text-[#d9601a]' : ''}`}>
            {s}
            {s === '资料' && <span className="absolute -bottom-[7px] left-[11px] h-[6px] w-[55px] rounded bg-[#e0590f]" />}
          </span>
        ))}
      </div>
      <div className="grid h-[152px] grid-cols-4 content-start gap-x-[19px] gap-y-[18px] overflow-hidden pt-[35px] pr-[41px] pl-[42px] text-[39px] text-[#666]">
        {TOPICS.map((t, i) => (
          <div key={t} className={`flex h-[78px] items-center justify-center rounded-[11px] pb-[1px] ${i === 0 ? 'bg-[#feece3] text-[#ec5a10]' : 'bg-[#f7f8fa]'}`}>{t}</div>
        ))}
      </div>
    </>
  )
}

function BottomBar() {
  return (
    <>
      <div className="flex h-[127px] border-t-2 border-[#d8d8d8] bg-[#f6f7f9] text-[#666]">
        <div className="w-[275px]">
          <div className="ml-[117px] w-0 border-x-[10px] border-b-[7px] border-x-transparent border-b-[#777] pt-[9px]" />
          <div className="mt-[6px] h-[48px] pl-[53px] text-[35px] leading-[47px] tracking-[-0.1px] text-[#0f9413]">17852.97</div>
          <div className="flex h-[43px] items-center pl-[11px] text-[33px] whitespace-nowrap">
            商业百货<span className="ml-[11px] text-[28px] tracking-[-0.9px] text-[#0f9413]">−0.05%</span>
          </div>
        </div>
        <div className="mt-[17px] flex h-[88px] w-[188px] items-center justify-center rounded-[16px] bg-linear-to-b from-[#f45048] to-[#ec706c] pt-[3px] text-[40px] font-medium text-white">买</div>
        <div className="mt-[17px] ml-[13px] flex h-[88px] w-[188px] items-center justify-center rounded-[16px] bg-linear-to-b from-[#3b76f8] to-[#6c98fd] pt-[3px] text-[40px] font-medium text-white">卖</div>
        <div className="ml-[36px] flex w-[90px] shrink-0 flex-col items-center text-[29px]">
          <span className="h-[76px] text-[49px] leading-[82px] font-medium text-[#2b2b2b]">撤</span>
          <span className="leading-[40px]">撤单</span>
        </div>
        <div className="ml-[34px] flex w-[110px] shrink-0 flex-col items-center text-[29px]">
          <svg width="50" height="76" viewBox="0 0 50 76" fill="none" stroke="#333" strokeWidth="3.400">
            <rect x="2" y="15" width="46" height="46" rx="8" />
            <path d="M25 27V49M14 38H36" strokeWidth="3.800" />
          </svg>
          <span className="leading-[40px]">加自选</span>
        </div>
        <div className="ml-[39px] flex w-[80px] shrink-0 flex-col items-center text-[29px]">
          <svg width="44" height="76" viewBox="0 0 44 76" fill="#333"><circle cx="5" cy="41" r="4.400" /><circle cx="22" cy="41" r="4.400" /><circle cx="39" cy="41" r="4.400" /></svg>
          <span className="leading-[40px]">更多</span>
        </div>
      </div>
      <div className="h-[44px] bg-white pt-[16px]">
        <div className="mx-auto h-[10px] w-[399px] rounded-full bg-[#333]" />
      </div>
    </>
  )
}

export default function App() {
  return (
    <div className={`h-[2340px] w-[1080px] overflow-hidden bg-white ${CJK}`}>
      <StatusBar />
      <Header />
      <Quote />
      <Notice />
      <PeriodTabs />
      <MaLegend />
      <PriceChart />
      <VolumeChart />
      <Banner />
      <Sections />
      <BottomBar />
    </div>
  )
}
